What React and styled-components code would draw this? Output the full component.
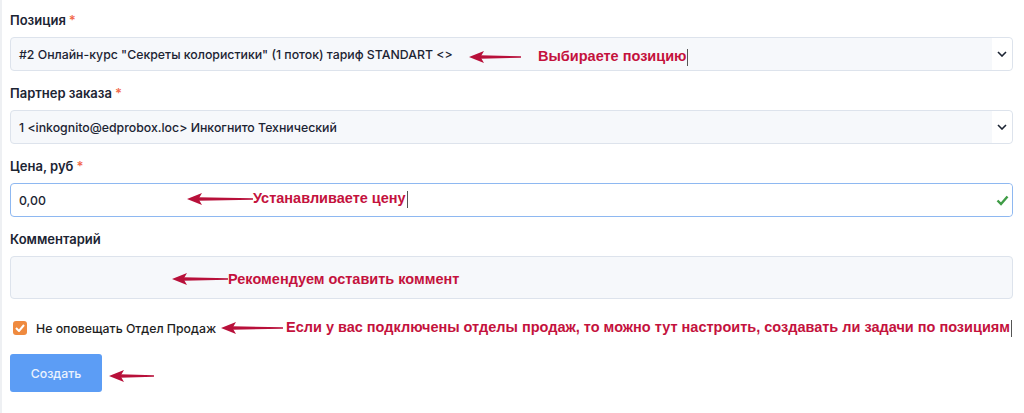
import React from "react";
import styled, { createGlobalStyle } from "styled-components";

const Global = createGlobalStyle`
  html, body { margin: 0; padding: 0; background: #fff; }
  body { font-family: Inter, "Noto Sans", sans-serif; }
`;

const Page = styled.div`
  position: relative;
  width: 1024px;
  height: 413px;
  box-sizing: border-box;
  border-left: 2px solid #eef0f3;
  padding: 12px 11px 0 8px;
  overflow: hidden;
`;

const Group = styled.div`
  margin-bottom: 14px;
`;

const Label = styled.div`
  font-size: 13px;
  font-weight: 600;
  line-height: 16px;
  color: #1c2433;
  margin-bottom: 9px;
  span { color: #f26a4b; margin-left: 3px; }
`;

const Field = styled.div`
  position: relative;
  box-sizing: border-box;
  height: ${p => p.$h || 34}px;
  border: 1px solid ${p => (p.$focus ? "#8eb8f1" : "#dde3ec")};
  border-radius: 4px;
  background: ${p => (p.$white ? "#fff" : "#f6f8fb")};
  display: flex;
  align-items: center;
  padding-left: 8px;
  font-size: 12.3px;
  font-weight: 500;
  color: #1c2433;
`;

const FieldText = styled.div`
  flex: 1;
`;

const Side = styled.div`
  width: 20px;
  align-self: stretch;
  background: #fff;
  border-radius: 0 4px 4px 0;
  display: flex;
  align-items: center;
  justify-content: center;
  color: #1c2433;
`;

const CheckRow = styled.label`
  display: flex;
  align-items: center;
  gap: 9px;
  margin: 22px 0 19px 3px;
  font-size: 12.3px;
  font-weight: 500;
  color: #1e1e1e;
  height: 14px;
`;

const Box = styled.span`
  width: 14px;
  height: 14px;
  border-radius: 3px;
  background: #ef8a3f;
  display: flex;
  align-items: center;
  justify-content: center;
`;

const Button = styled.button`
  width: 92px;
  height: 38px;
  border: none;
  border-radius: 3px;
  background: #5c9df5;
  color: #eaf2fe;
  font-family: Inter, "Noto Sans", sans-serif;
  font-size: 12.3px;
  font-weight: 500;
`;

const Note = styled.div`
  position: absolute;
  left: ${p => p.$x}px;
  top: ${p => p.$y}px;
  display: flex;
  align-items: center;
  gap: ${p => p.$gap}px;
  font-family: "Liberation Sans", Arial, sans-serif;
  font-weight: 700;
  font-size: 14.5px;
  color: #c4123d;
  white-space: nowrap;
  height: 18px;
`;

const Caret = styled.span`
  display: inline-block;
  width: 1px;
  height: 17px;
  background: #555;
  margin-left: 1px;
  vertical-align: middle;
`;

const Arrow = ({ w }) => (
  <svg width={w} height="14" viewBox={`0 0 ${w} 14`}>
    <path d={`M${w} 6.2 L11 5.3 L11 8.7 L${w} 7.8 Z`} fill="#b8103a" />
    <path d="M0 7 L15 1 L11.5 7 L15 13 Z" fill="#b8103a" />
  </svg>
);

const Chevron = () => (
  <svg width="10" height="6" viewBox="0 0 10 6">
    <path d="M1 1 L5 5 L9 1" stroke="#1c2433" strokeWidth="1.6" fill="none" />
  </svg>
);

export default function App() {
  return (
    <>
      <Global />
      <Page>
        <Group>
          <Label>Позиция<span>*</span></Label>
          <Field>
            <FieldText>#2 Онлайн-курс "Секреты колористики" (1 поток) тариф STANDART &lt;&gt;</FieldText>
            <Side><Chevron /></Side>
          </Field>
        </Group>
        <Group>
          <Label>Партнер заказа<span>*</span></Label>
          <Field>
            <FieldText>1 &lt;inkognito@edprobox.loc&gt; Инкогнито Технический</FieldText>
            <Side><Chevron /></Side>
          </Field>
        </Group>
        <Group>
          <Label>Цена, руб<span>*</span></Label>
          <Field $white $focus>
            <FieldText>0,00</FieldText>
            <Side>
              <svg width="13" height="11" viewBox="0 0 13 11">
                <path d="M1.5 5.5 L5 9 L11.5 1.5" stroke="#3f9c46" strokeWidth="2.4" fill="none" />
              </svg>
            </Side>
          </Field>
        </Group>
        <Group>
          <Label>Комментарий</Label>
          <Field $h={43} />
        </Group>
        <CheckRow>
          <Box>
            <svg width="10" height="8" viewBox="0 0 10 8">
              <path d="M1 4 L4 7 L9 1" stroke="#fff" strokeWidth="2" fill="none" />
            </svg>
          </Box>
          Не оповещать Отдел Продаж
        </CheckRow>
        <Button>Создать</Button>

        <Note $x={467} $y={48} $gap={17}>
          <Arrow w={52} />
          <span>Выбираете позицию<Caret /></span>
        </Note>
        <Note $x={185} $y={190} $gap={0}>
          <Arrow w={66} />
          <span>Устанавливаете цену<Caret /></span>
        </Note>
        <Note $x={170} $y={270} $gap={0}>
          <Arrow w={56} />
          <span>Рекомендуем оставить коммент</span>
        </Note>
        <Note $x={219} $y={319} $gap={3}>
          <Arrow w={62} />
          <span>Если у вас подключены отделы продаж, то можно тут настроить, создавать ли задачи по позициям<Caret /></span>
        </Note>
        <Note $x={107} $y={367} $gap={0}>
          <Arrow w={45} />
        </Note>
      </Page>
    </>
  );
}
